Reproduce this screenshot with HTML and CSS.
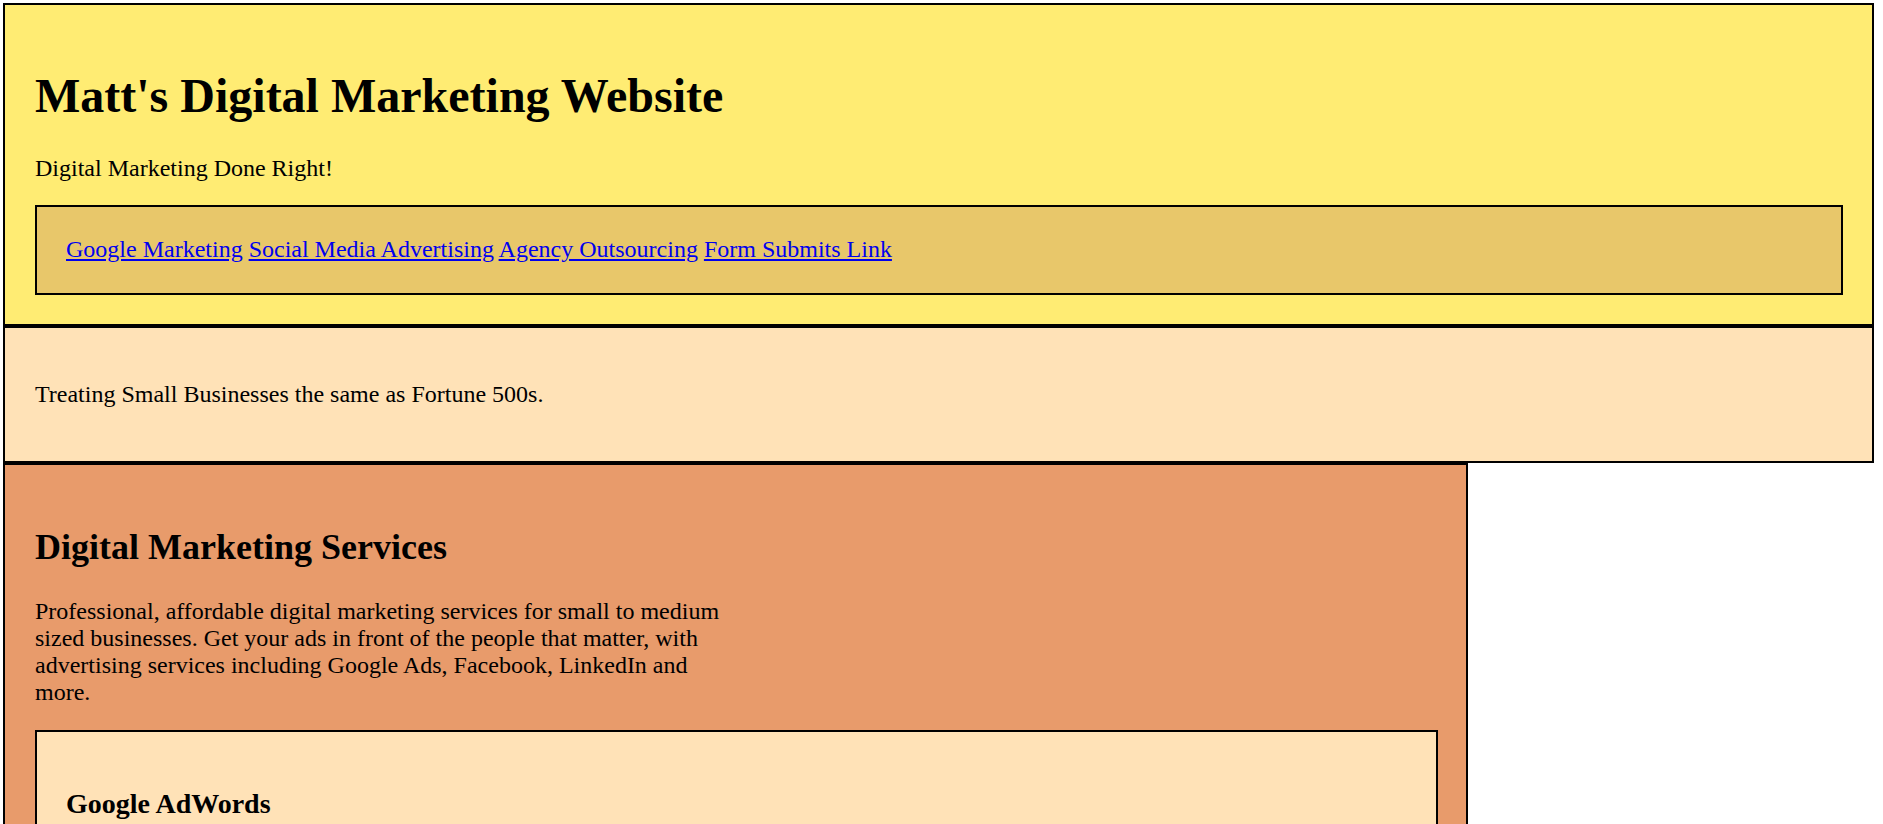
FILE: index.html
```html
<!DOCTYPE html>
<html lang="en">
<head>
<meta charset="utf-8">
<title>Matt's Digital Marketing Website</title>
<link rel="stylesheet" href="styles.css">
</head>
<body>
  <header class="site-header">
    <h1 class="site-title">Matt's Digital Marketing Website</h1>
    <p class="tagline">Digital Marketing Done Right!</p>
    <nav class="main-nav">
      <a href="#">Google Marketing</a>
      <a href="#">Social Media Advertising</a>
      <a href="#">Agency Outsourcing</a>
      <a href="#">Form Submits Link</a>
    </nav>
  </header>
  <section class="hero">
    <p class="hero-text">Treating Small Businesses the same as Fortune 500s.</p>
  </section>
  <main class="services">
    <h2 class="services-title">Digital Marketing Services</h2>
    <p class="services-intro">Professional, affordable digital marketing services for small to medium sized businesses. Get your ads in front of the people that matter, with advertising services including Google Ads, Facebook, LinkedIn and more.</p>
    <article class="service-card">
      <h3 class="service-title">Google AdWords</h3>
    </article>
  </main>
</body>
</html>
```

FILE: styles.css
```css
html {
  font-size: 24px;
}

body {
  margin: 3px 9px 0 3px;
  font-family: "Liberation Serif", "Times New Roman", serif;
  font-size: 24px;
  color: #000;
  background: #fff;
}

.site-header {
  background: #ffec73;
  border: 2px solid #000;
  padding: 31px 29px 29px 30px;
}

.site-title {
  font-size: 48px;
  font-weight: bold;
  margin: 32px 0;
}

.tagline {
  margin: 24px 0 23px;
}

.main-nav {
  background: #e8c76a;
  border: 2px solid #000;
  padding: 29px 29px 30px;
}

.main-nav a {
  color: #0000ee;
  text-decoration: underline;
}

.hero {
  background: #ffe2b7;
  border: 2px solid #000;
  padding: 29px 30px;
}

.hero-text {
  margin: 24px 0;
}

.services {
  display: block;
  box-sizing: border-box;
  width: 1465px;
  background: #e89b6b;
  border: 2px solid #000;
  padding: 31px 28px 30px 30px;
}

.services-title {
  font-size: 36px;
  font-weight: bold;
  margin: 30px 0;
}

.services-intro {
  max-width: 700px;
  margin: 24px 0;
}

.service-card {
  background: #ffe2b7;
  border: 2px solid #000;
  padding: 28px 29px;
}

.service-title {
  font-size: 28px;
  font-weight: bold;
  margin: 28px 0;
}
```
